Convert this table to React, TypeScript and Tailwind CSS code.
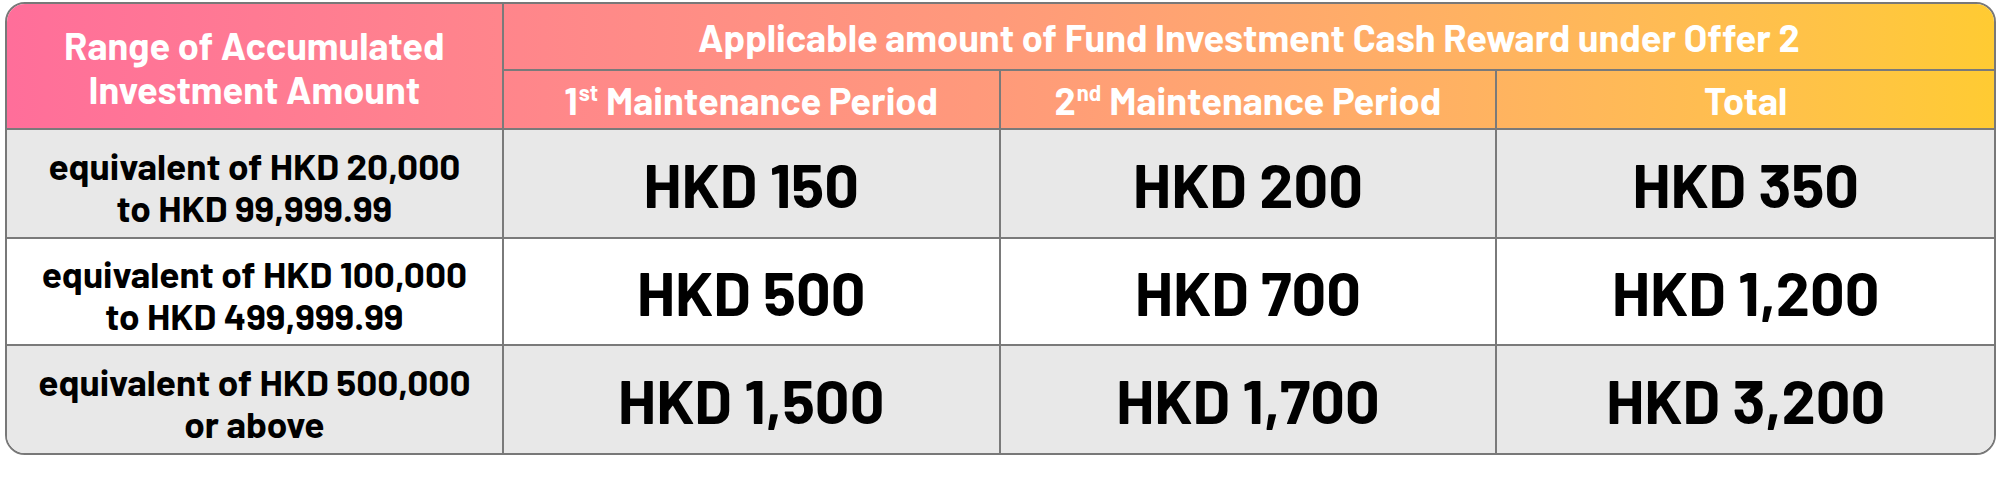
const font = { fontFamily: "'Barlow', 'Barlow Semi Condensed', sans-serif" };

const rows = [
  { range: ["equivalent of HKD 20,000", "to HKD 99,999.99"], values: ["HKD 150", "HKD 200", "HKD 350"], shaded: true, h: "h-[109px]" },
  { range: ["equivalent of HKD 100,000", "to HKD 499,999.99"], values: ["HKD 500", "HKD 700", "HKD 1,200"], shaded: false, h: "h-[107px]" },
  { range: ["equivalent of HKD 500,000", "or above"], values: ["HKD 1,500", "HKD 1,700", "HKD 3,200"], shaded: true, h: "h-[109px]" },
];

function Ordinal({ n, suffix }: { n: string; suffix: string }) {
  return (
    <span>
      {n}
      <sup className="text-[22px] relative -top-[14px] ml-[1px]">{suffix}</sup>
    </span>
  );
}

export default function App() {
  return (
    <div className="w-[2000px] h-[477px] bg-white pl-[5px] pt-[2px]" style={font}>
      <div className="w-[1991px] border-2 border-[#787878] rounded-[20px] overflow-hidden">
        {/* header */}
        <div className="grid grid-cols-4 bg-gradient-to-r from-[#ff6e9a] via-[#ff9a7a] to-[#ffcb32] text-white font-bold text-[38px] leading-none">
          <div className="row-span-2 border-r-2 border-[#7a7a7a] flex flex-col items-center justify-center leading-[44px] pt-[2px]">
            <span>Range of Accumulated</span>
            <span>Investment Amount</span>
          </div>
          <div className="col-span-3 h-[67px] border-b-2 border-[#7a7a7a] flex items-center justify-center">
            Applicable amount of Fund Investment Cash Reward under Offer 2
          </div>
          <div className="h-[57px] border-r-2 border-[#7a7a7a] flex items-center justify-center">
            <Ordinal n="1" suffix="st" />
            <span className="ml-[8px]">Maintenance Period</span>
          </div>
          <div className="h-[57px] border-r-2 border-[#7a7a7a] flex items-center justify-center">
            <Ordinal n="2" suffix="nd" />
            <span className="ml-[8px]">Maintenance Period</span>
          </div>
          <div className="h-[57px] flex items-center justify-center">Total</div>
        </div>

        {/* body */}
        {rows.map((r, i) => (
          <div
            key={i}
            className={`grid grid-cols-4 border-t-2 border-[#7a7a7a] text-black ${r.h} ${r.shaded ? "bg-[#e8e8e8]" : "bg-white"}`}
          >
            <div className="border-r-2 border-[#7a7a7a] flex flex-col items-center justify-center font-bold text-[37px] leading-[42px] pt-[4px]">
              <span>{r.range[0]}</span>
              <span>{r.range[1]}</span>
            </div>
            {r.values.map((v, j) => (
              <div
                key={j}
                className={`flex items-center justify-center font-bold text-[61px] leading-none ${j < 2 ? "border-r-2 border-[#7a7a7a]" : ""}`}
              >
                {v}
              </div>
            ))}
          </div>
        ))}
      </div>
    </div>
  );
}
